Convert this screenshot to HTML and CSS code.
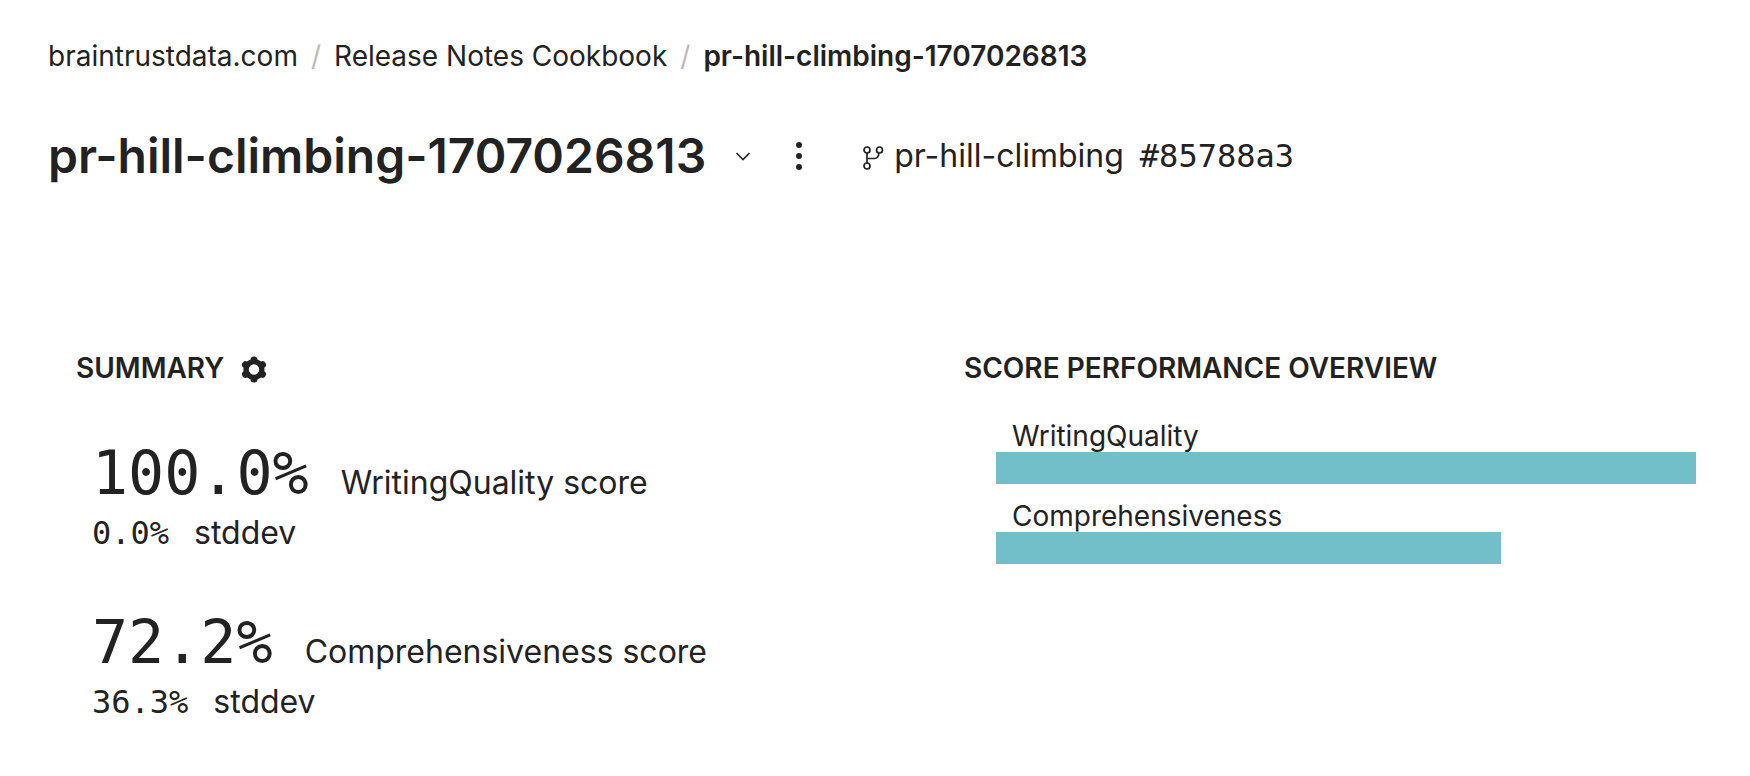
FILE: index.html
```html
<!DOCTYPE html>
<html lang="en">
<head>
<meta charset="utf-8">
<meta name="viewport" content="width=device-width, initial-scale=1">
<title>pr-hill-climbing-1707026813</title>
<link rel="stylesheet" href="styles.css">
</head>
<body>
<nav class="breadcrumbs" aria-label="Breadcrumb">
  <a href="#org">braintrustdata.com</a>
  <span class="separator">/</span>
  <a href="#project">Release Notes Cookbook</a>
  <span class="separator">/</span>
  <a class="current" href="#experiment" aria-current="page">pr-hill-climbing-1707026813</a>
</nav>

<header class="title-bar">
  <h1 class="title">pr-hill-climbing-1707026813</h1>
  <button class="icon-button switcher" type="button" aria-label="Switch experiment">
    <svg width="24" height="24" viewBox="0 0 24 24" fill="none" stroke="currentColor" stroke-width="1.6"><path d="M5.500 9l6.500 6.500 6.500-6.500"/></svg>
  </button>
  <button class="icon-button more" type="button" aria-label="More actions">
    <svg width="24" height="32" viewBox="0 0 24 32" fill="currentColor"><circle cx="12" cy="5" r="3"/><circle cx="12" cy="16" r="3"/><circle cx="12" cy="27" r="3"/></svg>
  </button>
  <div class="source">
    <svg class="branch-icon" width="24" height="28" viewBox="0 0 24 28" fill="none" stroke="currentColor" stroke-width="1.7"><circle cx="5" cy="8" r="3"/><circle cx="17.500" cy="8" r="3"/><circle cx="5" cy="24" r="3"/><path d="M5 11v10M5 16.500h7.500q3.800 0 4.500-5.500"/></svg>
    <span>pr-hill-climbing</span>
    <span class="commit">#85788a3</span>
  </div>
</header>

<main class="panels">
  <section>
    <div class="panel-heading">
      <h2>SUMMARY</h2>
      <button class="icon-button" type="button" aria-label="Summary settings">
        <svg width="28" height="28" viewBox="0 0 28 28" fill="none" stroke="currentColor"><circle cx="14" cy="15.500" r="7.900" stroke-width="5.400"/><path stroke-width="7" stroke-linecap="round" d="M14 5.900v.5M14 24.600v.5M5.500 10.800l.5.300M22 19.900l.5.300M5.500 20.200l.5-.3M22 11.100l.5-.3"/></svg>
      </button>
    </div>
    <div class="scores">
      <div>
        <div class="score"><span class="value">100.0%</span><span>WritingQuality score</span></div>
        <div class="deviation"><span class="amount">0.0%</span><span>stddev</span></div>
      </div>
      <div>
        <div class="score"><span class="value">72.2%</span><span>Comprehensiveness score</span></div>
        <div class="deviation"><span class="amount">36.3%</span><span>stddev</span></div>
      </div>
    </div>
  </section>

  <section>
    <div class="panel-heading"><h2>SCORE PERFORMANCE OVERVIEW</h2></div>
    <div class="chart">
      <div>
        <div class="bar-label">WritingQuality</div>
        <div class="bar" style="width: 100%"></div>
      </div>
      <div>
        <div class="bar-label">Comprehensiveness</div>
        <div class="bar" style="width: 72.2%"></div>
      </div>
    </div>
  </section>
</main>
</body>
</html>
```

FILE: styles.css
```css
* {
  box-sizing: border-box;
}

body {
  margin: 0;
  padding: 36px 0 32px;
  background: #fff;
  color: #222;
  font-family: Inter, sans-serif;
  font-size: 32px;
  line-height: 48px;
}

h1,
h2 {
  margin: 0;
  font-weight: 600;
}

a {
  color: inherit;
  text-decoration: none;
}

svg {
  overflow: visible;
}

.breadcrumbs {
  display: flex;
  flex-wrap: wrap;
  gap: 13px;
  padding: 0 48px;
  font-size: 28px;
  line-height: 40px;
}

.separator {
  color: #bbb;
}

.current {
  font-weight: 600;
}

.title-bar {
  display: flex;
  flex-wrap: wrap;
  align-items: center;
  margin-top: 48px;
  padding: 0 48px;
}

.title {
  font-size: 48px;
  line-height: 64px;
}

.icon-button {
  display: flex;
  padding: 0;
  border: 0;
  background: none;
  color: inherit;
  cursor: pointer;
}

.switcher {
  margin-left: 25px;
}

.more {
  margin-left: 32px;
}

.source {
  display: flex;
  align-items: center;
  gap: 16px;
  margin-left: 51px;
}

.branch-icon {
  margin-right: -8px;
}

.commit,
.value,
.amount {
  font-family: "DejaVu Sans Mono", monospace;
}

.panels {
  display: grid;
  grid-template-columns: 1fr 1fr;
  gap: 156px;
  margin-top: 160px;
  padding: 0 54px 0 76px;
}

.panel-heading {
  display: flex;
  align-items: center;
  gap: 16px;
  font-size: 28px;
  line-height: 40px;
}

.panel-heading h2 {
  font-size: 28px;
}

.scores {
  display: grid;
  gap: 49px;
  margin-top: 49px;
  padding-left: 16px;
}

.score {
  display: flex;
  align-items: baseline;
  gap: 32px;
}

.value {
  font-size: 60px;
  line-height: 72px;
}

.deviation {
  display: flex;
  align-items: baseline;
  gap: 25px;
}

.chart {
  display: grid;
  gap: 16px;
  margin-top: 32px;
  padding-left: 32px;
}

.bar-label {
  padding-left: 16px;
  font-size: 28px;
  line-height: 32px;
}

.bar {
  height: 32px;
  background: #72bfca;
}
```
